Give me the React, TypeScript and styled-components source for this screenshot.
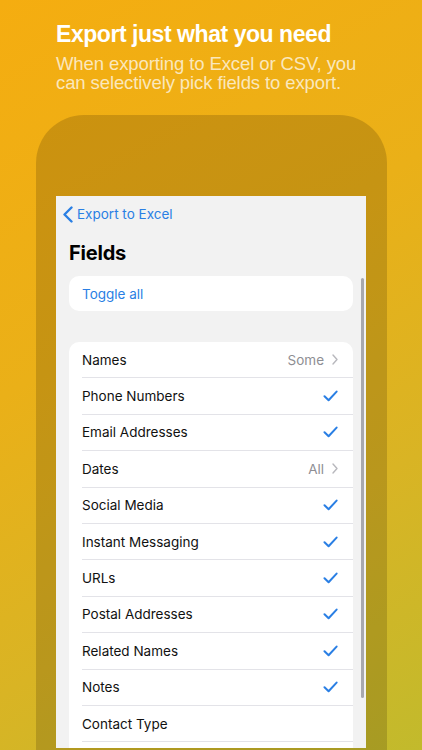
import React from "react";
import styled, { createGlobalStyle } from "styled-components";

const GlobalStyle = createGlobalStyle`
  html, body { margin: 0; padding: 0; }
  body { width: 422px; height: 750px; overflow: hidden; }
  * { box-sizing: border-box; }
`;

const Page = styled.div`
  width: 422px;
  height: 750px;
  overflow: hidden;
  background: linear-gradient(150deg, #f5ad10 0%, #eab018 40%, #d9b424 70%, #c2ba2c 100%);
  display: flex;
  flex-direction: column;
  font-family: "Inter", "Liberation Sans", sans-serif;
`;

const Header = styled.header`
  padding: 20px 30px 0 56px;
  height: 115px;
  font-family: "Liberation Sans", Arial, sans-serif;
`;

const Title = styled.h1`
  margin: 0;
  color: #ffffff;
  font-size: 23px;
  font-weight: 700;
  line-height: 28px;
  letter-spacing: -0.45px;
`;

const Subtitle = styled.p`
  margin: 6px 0 0;
  color: rgba(255, 255, 255, 0.72);
  font-size: 18.5px;
  line-height: 19px;
  letter-spacing: -0.1px;
`;

const Frame = styled.div`
  margin-left: 36px;
  width: 351px;
  flex: 1;
  background: rgba(40, 20, 0, 0.18);
  border-radius: 48px 48px 0 0;
  padding: 81px 21px 0 20px;
`;

const Screen = styled.div`
  height: 552px;
  background: #f2f2f2;
  position: relative;
  overflow: hidden;
  padding: 0 13px;
`;

const NavBar = styled.div`
  height: 36px;
  display: flex;
  align-items: center;
  gap: 3px;
  margin-left: -7px;
  color: #2a7fe4;
  font-size: 13.5px;
`;

const LargeTitle = styled.h2`
  margin: 9px 0 0;
  font-size: 20px;
  font-weight: 700;
  color: #000;
  line-height: 24px;
  letter-spacing: -0.2px;
`;

const Card = styled.div<{ $top: number }>`
  margin-top: ${(p) => p.$top}px;
  background: #ffffff;
  border-radius: 10px;
  overflow: hidden;
`;

const ActionRow = styled.div`
  height: 35px;
  display: flex;
  align-items: center;
  padding-left: 13px;
  color: #2a7fe4;
  font-size: 13.5px;
`;

const Row = styled.div<{ $last: boolean }>`
  height: 36.4px;
  margin-left: 13px;
  padding-right: 15px;
  display: flex;
  align-items: center;
  justify-content: space-between;
  font-size: 13.5px;
  color: #111;
  border-bottom: ${(p) => (p.$last ? "none" : "1px solid #e3e3e8")};
`;

const Detail = styled.span`
  display: flex;
  align-items: center;
  gap: 8px;
  color: #8e8e93;
  font-size: 13.5px;
`;

const ScrollBar = styled.div`
  position: absolute;
  right: 2px;
  top: 82px;
  width: 3px;
  height: 420px;
  border-radius: 2px;
  background: #a8a8ad;
`;

const BackChevron = () => (
  <svg width="12" height="17" viewBox="0 0 12 17">
    <path d="M9.5 1.5 L2.5 8.5 L9.5 15.5" fill="none" stroke="#2a7fe4" strokeWidth="2.4" strokeLinecap="round" strokeLinejoin="round" />
  </svg>
);

const Chevron = () => (
  <svg width="6" height="11" viewBox="0 0 6 11">
    <path d="M1 1 L5 5.5 L1 10" fill="none" stroke="#b8b8bd" strokeWidth="1.4" strokeLinecap="round" strokeLinejoin="round" />
  </svg>
);

const Check = () => (
  <svg width="15" height="12" viewBox="0 0 15 12">
    <path d="M1.5 6.2 L5.6 10.3 L13.6 1.6" fill="none" stroke="#2a7fe4" strokeWidth="2" strokeLinecap="round" strokeLinejoin="round" />
  </svg>
);

type Field = { name: string; value?: string; checked?: boolean };

const fields: Field[] = [
  { name: "Names", value: "Some" },
  { name: "Phone Numbers", checked: true },
  { name: "Email Addresses", checked: true },
  { name: "Dates", value: "All" },
  { name: "Social Media", checked: true },
  { name: "Instant Messaging", checked: true },
  { name: "URLs", checked: true },
  { name: "Postal Addresses", checked: true },
  { name: "Related Names", checked: true },
  { name: "Notes", checked: true },
  { name: "Contact Type" },
  { name: "" },
];

export default function App() {
  return (
    <>
      <GlobalStyle />
      <Page>
        <Header>
          <Title>Export just what you need</Title>
          <Subtitle>
            When exporting to Excel or CSV, you
            <br />
            can selectively pick fields to export.
          </Subtitle>
        </Header>
        <Frame>
          <Screen>
            <NavBar>
              <BackChevron />
              <span>Export to Excel</span>
            </NavBar>
            <LargeTitle>Fields</LargeTitle>
            <Card $top={11}>
              <ActionRow>Toggle all</ActionRow>
            </Card>
            <Card $top={31}>
              {fields.map((f, i) => (
                <Row key={i} $last={i === fields.length - 1}>
                  <span>{f.name}</span>
                  {f.value ? (
                    <Detail>
                      {f.value}
                      <Chevron />
                    </Detail>
                  ) : f.checked ? (
                    <Check />
                  ) : null}
                </Row>
              ))}
            </Card>
            <ScrollBar />
          </Screen>
        </Frame>
      </Page>
    </>
  );
}
